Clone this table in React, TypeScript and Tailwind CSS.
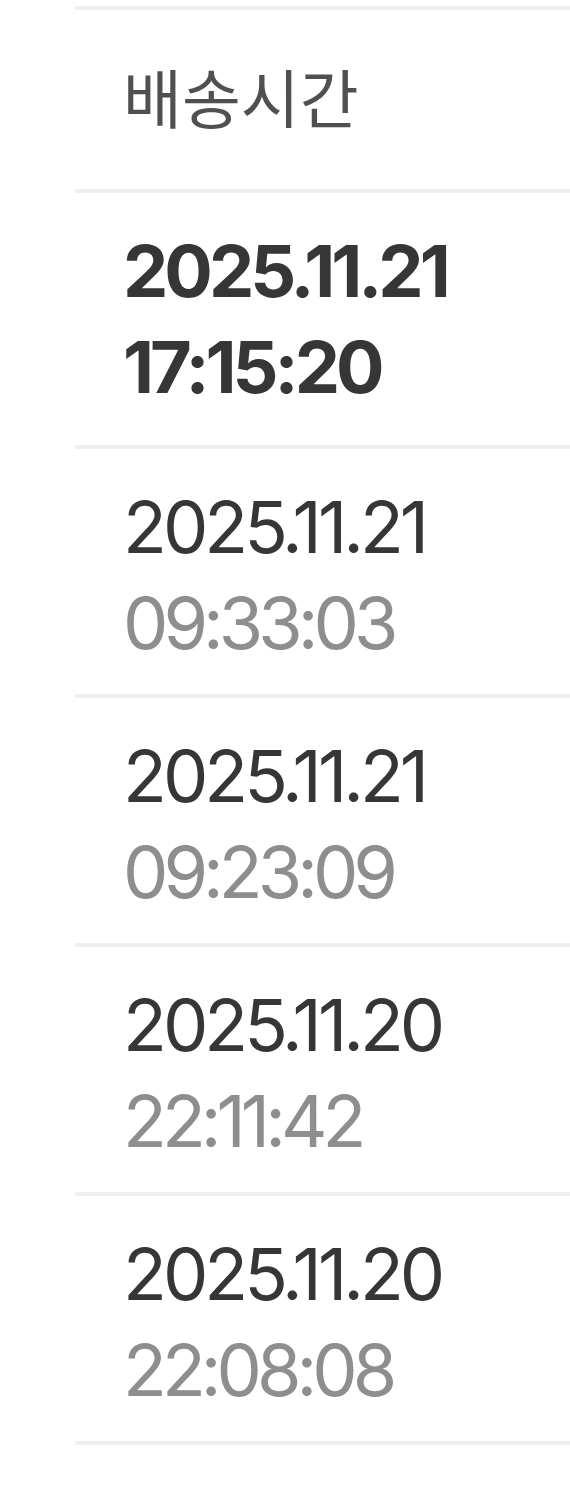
const rows = [
  { date: "2025.11.21", time: "17:15:20", active: true },
  { date: "2025.11.21", time: "09:33:03", active: false },
  { date: "2025.11.21", time: "09:23:09", active: false },
  { date: "2025.11.20", time: "22:11:42", active: false },
  { date: "2025.11.20", time: "22:08:08", active: false },
];

export default function App() {
  return (
    <div
      className="min-h-[1500px] bg-white pl-[75px] pt-[6px]"
      style={{ fontFamily: 'Inter, "Noto Sans CJK KR", sans-serif' }}
    >
      <div className="border-t-4 border-[#efefef]">
        <div className="h-[179px] pl-[48px] flex items-center text-[64px] text-[#505050]">
          배송시간
        </div>
      </div>
      {rows.map((r, i) => (
        <div
          key={i}
          className={
            "border-t-4 border-[#efefef] pl-[48px] pt-[30px] " +
            (r.active ? "h-[256px]" : "h-[249px]")
          }
        >
          <div
            className={
              "text-[72px] leading-[96px] tracking-[-4px] text-[#363636] " +
              (r.active ? "font-bold" : "font-normal")
            }
          >
            {r.date}
          </div>
          <div
            className={
              "text-[72px] leading-[96px] " +
              (r.active
                ? "tracking-[-4px] font-bold text-[#363636]"
                : "tracking-[-5px] font-normal text-[#8e8e8e]")
            }
          >
            {r.time}
          </div>
        </div>
      ))}
      <div className="border-t-4 border-[#efefef]" />
    </div>
  );
}
